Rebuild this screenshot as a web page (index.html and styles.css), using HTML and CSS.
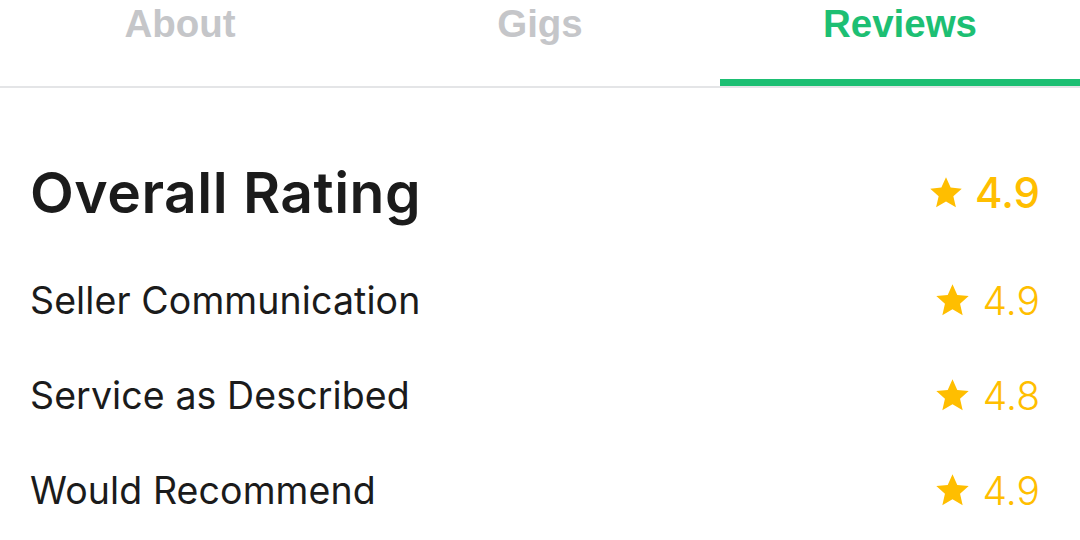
FILE: index.html
```html
<!DOCTYPE html>
<html>
<head>
<meta charset="utf-8">
<link rel="stylesheet" href="styles.css">
</head>
<body>
<div class="tabs">
  <div class="tab">About</div>
  <div class="tab">Gigs</div>
  <div class="tab active">Reviews</div>
</div>
<div class="ratings">
  <div class="row overall">
    <span class="label">Overall Rating</span>
    <span class="score"><svg class="star" viewBox="0 0 24 24"><path d="M12 1.5l3.1 6.9 7.4.7-5.6 5 1.7 7.4L12 17.6l-6.6 3.9 1.7-7.4-5.6-5 7.4-.7z"/></svg>4.9</span>
  </div>
  <div class="row">
    <span class="label">Seller Communication</span>
    <span class="score"><svg class="star" viewBox="0 0 24 24"><path d="M12 1.5l3.1 6.9 7.4.7-5.6 5 1.7 7.4L12 17.6l-6.6 3.9 1.7-7.4-5.6-5 7.4-.7z"/></svg>4.9</span>
  </div>
  <div class="row">
    <span class="label">Service as Described</span>
    <span class="score"><svg class="star" viewBox="0 0 24 24"><path d="M12 1.5l3.1 6.9 7.4.7-5.6 5 1.7 7.4L12 17.6l-6.6 3.9 1.7-7.4-5.6-5 7.4-.7z"/></svg>4.8</span>
  </div>
  <div class="row">
    <span class="label">Would Recommend</span>
    <span class="score"><svg class="star" viewBox="0 0 24 24"><path d="M12 1.5l3.1 6.9 7.4.7-5.6 5 1.7 7.4L12 17.6l-6.6 3.9 1.7-7.4-5.6-5 7.4-.7z"/></svg>4.9</span>
  </div>
</div>
</body>
</html>
```
FILE: styles.css
```css
html, body {
  margin: 0;
  padding: 0;
  background: #fff;
}
body {
  width: 1080px;
  height: 540px;
  overflow: hidden;
  font-family: Inter, "Noto Sans", sans-serif;
  color: #1b1b1b;
}
.tabs {
  display: flex;
  border-bottom: 2px solid #e4e5e7;
  height: 86px;
}
.tab {
  flex: 1;
  text-align: center;
  font-family: "Liberation Sans", Arial, sans-serif;
  font-weight: bold;
  font-size: 38.5px;
  line-height: 48px;
  color: #c5c6c9;
  box-sizing: border-box;
}
.tab.active {
  color: #1dbf73;
  border-bottom: 7px solid #1dbf73;
}
.ratings {
  padding: 44px 40px 0 30px;
  display: flex;
  flex-direction: column;
}
.row {
  display: flex;
  justify-content: space-between;
  align-items: center;
  height: 95px;
}
.row.overall {
  height: 121px;
}
.label {
  font-size: 37.5px;
  font-weight: 400;
  letter-spacing: 0.1px;
}
.overall .label {
  font-size: 57px;
  font-weight: 600;
  letter-spacing: 0.5px;
}
.score {
  display: flex;
  align-items: center;
  color: #ffbe00;
  font-size: 39px;
  font-weight: 300;
}
.overall .score {
  font-size: 42px;
  font-weight: 500;
}
.star {
  width: 37px;
  height: 37px;
  fill: #ffbe00;
  margin-right: 12px;
}
.overall .star {
  width: 36px;
  height: 36px;
  margin-right: 11px;
}
```
